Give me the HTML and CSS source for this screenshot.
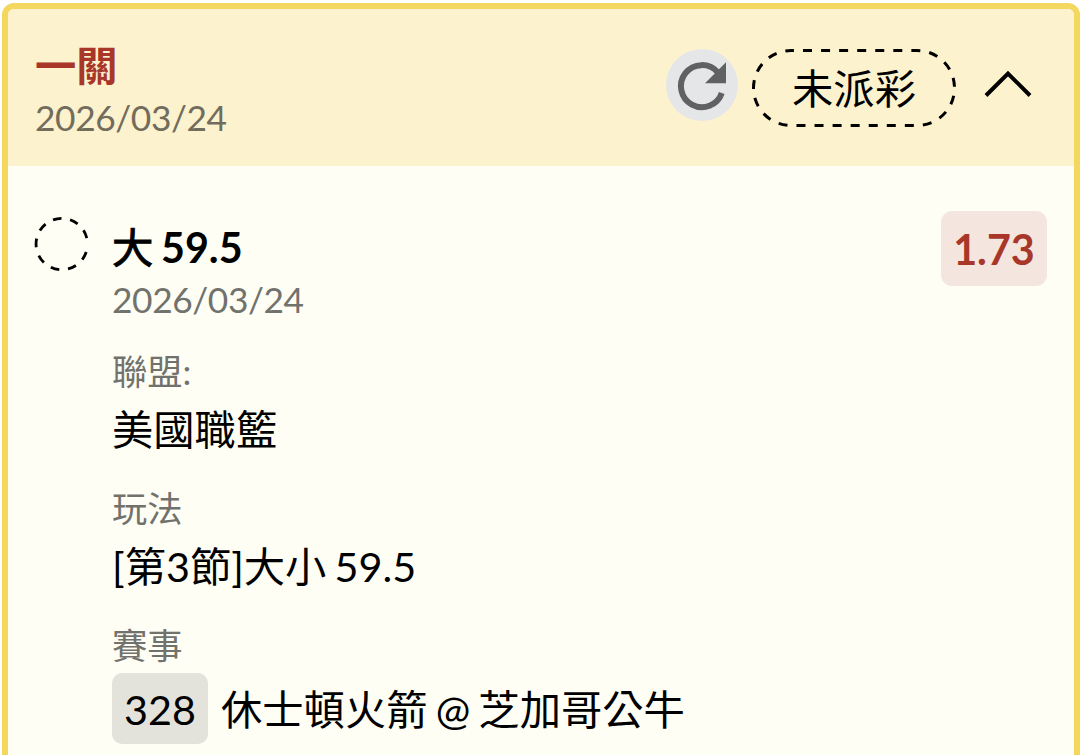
FILE: index.html
```html
<!DOCTYPE html>
<html lang="zh-Hant">
<head>
    <meta charset="UTF-8">
    <meta name="viewport" content="width=device-width, initial-scale=1.0">
    <title>一關</title>
    <link rel="stylesheet" href="styles.css">
</head>
<body>
    <div class="card">
        <div class="card-header">
            <div class="header-info">
                <div class="title">一關</div>
                <div class="date">2026/03/24</div>
            </div>
            <button class="refresh-btn" aria-label="refresh">
                <svg width="72" height="72" viewBox="0 0 72 72">
                    <path d="M55.8 44 A21 21 0 1 1 51.5 23" fill="none" stroke="#5f6163" stroke-width="6"/>
                    <path d="M60 13.3 V34.3 H39 Z" fill="#5f6163"/>
                </svg>
            </button>
            <div class="status">
                <svg class="status-border" width="204" height="78" viewBox="0 0 204 78">
                    <rect x="1.5" y="1.5" width="201" height="75" rx="37.5" fill="none" stroke="#000" stroke-width="3" stroke-dasharray="9 9.06" stroke-dashoffset="-12"/>
                </svg>
                <span>未派彩</span>
            </div>
            <svg class="arrow" width="48" height="30" viewBox="0 0 48 30">
                <path d="M2 26.5 L24 4.5 L46 26.5" fill="none" stroke="#000" stroke-width="4"/>
            </svg>
        </div>

        <div class="card-body">
            <svg class="pending" width="56" height="56" viewBox="0 0 56 56">
                <path d="M53.2 36 A25.7 25.7 0 1 1 53.8 22.2" fill="none" stroke="#000" stroke-width="2.8" stroke-dasharray="8.6 8.7"/>
            </svg>
            <div class="bet">
                <div class="pick"><span class="side">大</span> 59.5</div>
                <div class="date">2026/03/24</div>
                <div class="row">
                    <div class="label">聯盟:</div>
                    <div class="value">美國職籃</div>
                </div>
                <div class="row">
                    <div class="label">玩法</div>
                    <div class="value">[第3節]大小 59.5</div>
                </div>
                <div class="row">
                    <div class="label">賽事</div>
                    <div class="value game"><span class="code">328</span><span>休士頓火箭 @ 芝加哥公牛</span></div>
                </div>
            </div>
            <div class="odds">1.73</div>
        </div>
    </div>
</body>
</html>
```

FILE: styles.css
```css
* {
    box-sizing: border-box;
}

body {
    margin: 0;
    height: 755px;
    padding: 3px 0 0 2px;
    overflow: hidden;
    background: #fff;
    font-family: Lato, "Noto Sans CJK TC", sans-serif;
    font-size: 41.3px;
    word-spacing: -2.4px;
    color: #000;
}

.card {
    height: 780px;
    border: 6px solid #f3d75f;
    border-radius: 12px;
    background: #fefef5;
    overflow: hidden;
}

.card-header {
    display: flex;
    height: 157px;
    padding: 32px 42px 0 27px;
    background: #fdf2ce;
}

.header-info {
    flex: 1;
    margin-top: -2px;
}

.title {
    line-height: 52px;
    font-weight: 700;
    color: #a83729;
}

.date {
    padding-top: 1px;
    font-size: 35.3px;
    line-height: 52px;
    letter-spacing: -0.4px;
    color: #72726d;
}

.card-header .date {
    color: #716c5c;
}

.refresh-btn {
    width: 72px;
    height: 72px;
    margin: 8px 14px 0 0;
    padding: 0;
    border: none;
    border-radius: 50%;
    background: #e5e6e8;
}

.refresh-btn svg,
.status-border {
    display: block;
}

.status {
    position: relative;
    width: 204px;
    height: 78px;
    margin: 8px 28px 0 0;
    line-height: 78px;
    text-align: center;
}

.status-border {
    position: absolute;
    top: 0;
    left: 0;
}

.arrow {
    margin-top: 28px;
}

.card-body {
    display: flex;
    align-items: flex-start;
    padding: 45px 27px 0 25px;
}

.pending {
    margin-top: 5px;
}

.bet {
    flex: 1;
    padding: 10px 0 0 23px;
}

.pick {
    line-height: 52px;
    font-weight: 700;
}

/* a bit lighter than the bold number beside it */
.side {
    font-weight: 400;
    -webkit-text-stroke: 1px #000;
}

.row {
    margin-bottom: 23px;
}

.date + .row {
    margin-top: 20px;
}

.label {
    font-size: 35.3px;
    line-height: 52px;
    color: #72726d;
}

.value {
    line-height: 62px;
}

.game {
    display: flex;
    align-items: center;
    gap: 13px;
    height: 71px;
    margin-top: 1px;
}

.code {
    width: 96px;
    height: 71px;
    border-radius: 10px;
    background: #e3e3dc;
    line-height: 73px;
    text-align: center;
}

.odds {
    width: 106px;
    height: 75px;
    border-radius: 11px;
    background: #f4e6df;
    line-height: 77px;
    text-align: center;
    font-weight: 700;
    color: #a83729;
}
```
